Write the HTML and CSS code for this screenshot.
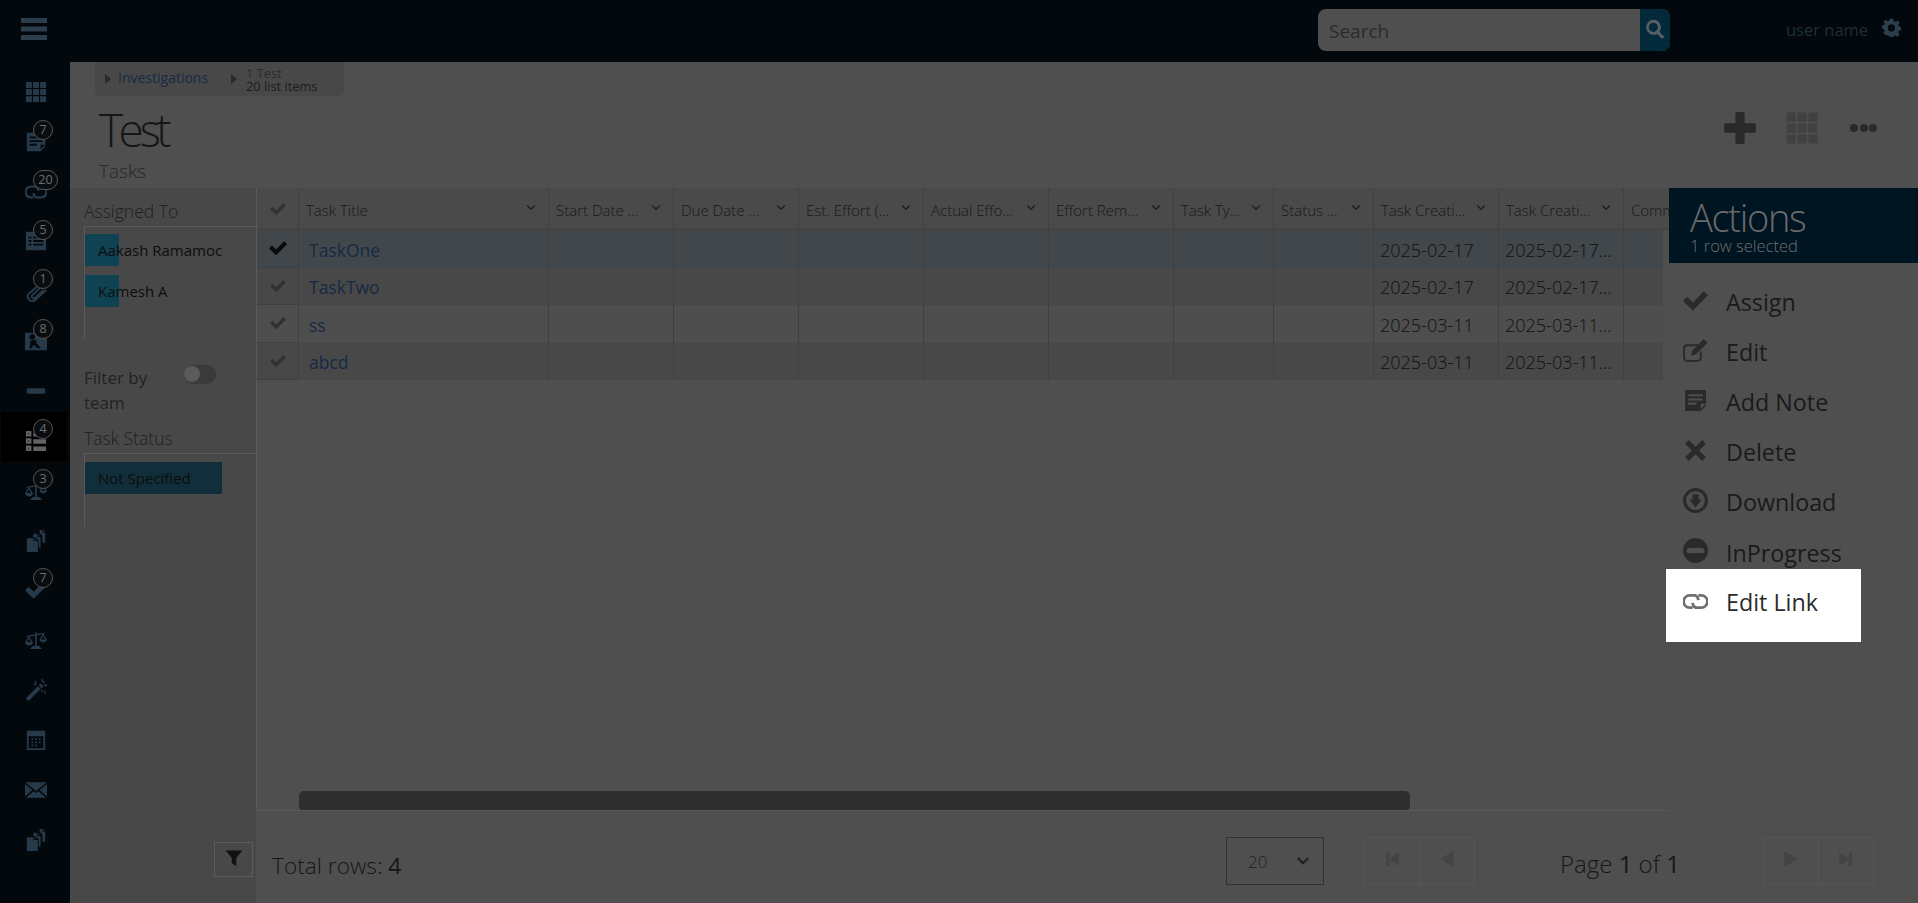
FILE: index.html
```html
<!DOCTYPE html>
<html lang="en">
<head>
<meta charset="utf-8">
<title>Test - Tasks</title>
<link rel="stylesheet" href="styles.css">
</head>
<body>
<svg class="defs" width="0" height="0" aria-hidden="true">
  <symbol id="i-check" viewBox="0 0 24 24"><path d="M0 12.500 4 8.500l5.500 5.500L20 3l4 4L9.500 21.500z"/></symbol>
  <symbol id="i-apps" viewBox="0 0 24 24"><path d="M1 1h6.500v6.500H1zM8.800 1h6.500v6.500H8.800zM16.500 1H23v6.500h-6.500zM1 8.800h6.500v6.500H1zM8.800 8.800h6.500v6.500H8.800zM16.500 8.800H23v6.500h-6.500zM1 16.500h6.500V23H1zM8.800 16.500h6.500V23H8.800zM16.500 16.500H23V23h-6.500z"/></symbol>
  <symbol id="i-note" viewBox="0 0 24 24"><path fill-rule="evenodd" d="M2 2h20v15l-5 5H2zm3 4v2h14V6zm0 4v2h14v-2zm0 4v2h8v-2zm12 1v5l5-5z"/></symbol>
  <symbol id="i-link" viewBox="0 -5 26 26"><path fill="none" stroke="currentColor" stroke-width="2.800" d="M10 14.400H7A6.400 6.400 0 0 1 7 1.600h6a6.400 6.400 0 0 1 3 5M16 1.600h3a6.400 6.400 0 0 1 0 12.800h-6a6.400 6.400 0 0 1-3-5"/></symbol>
  <symbol id="i-table" viewBox="0 0 24 24"><path fill-rule="evenodd" d="M1 2h22v20H1zm3 5v2h3V7zm5 0v2h11V7zm-5 4v2h3v-2zm5 0v2h11v-2zm-5 4v2h3v-2zm5 0v2h11v-2z"/></symbol>
  <symbol id="i-clip" viewBox="0 0 24 24"><path fill="none" stroke="currentColor" stroke-width="2.200" d="M18 3 4 15a5 5 0 0 0 7 7L23 11M17 8 8 16.500a2 2 0 0 0 3 3L20 11"/></symbol>
  <symbol id="i-image" viewBox="0 0 24 24"><path fill-rule="evenodd" d="M0 3h24v19H0zm8 1.500a3 3 0 1 0 0 6 3 3 0 0 0 0-6zM5 20h2.500l1.500-4 5 4h3.500l-5.500-6 1-2-3-1.500L6 12z"/></symbol>
  <symbol id="i-minus" viewBox="0 0 24 24"><rect x="2" y="9" width="20" height="6" rx="1"/></symbol>
  <symbol id="i-tasks" viewBox="0 0 24 24"><path fill-rule="evenodd" d="M1 1h6v6H1zm2.500 2.500v1h1v-1zM1 9h6v6H1zm2.500 2.500v1h1v-1zM1 17h6v6H1zm2.500 2.500v1h1v-1zM9 10h14v5H9zM9 18h14v5H9zM9 3h14v4H9z"/></symbol>
  <symbol id="i-scales" viewBox="0 0 26 24"><path d="M12 3h2v16h-2zM9 19h8l3 3.500H6zM2 7l21-3.500.3 1.500L2.300 8.500z"/><path fill-rule="evenodd" d="M4.500 7 0 15a5 5 0 0 0 9.500 0zm.1 3-2.400 4.500h4.700zM21.500 4 17 12a5 5 0 0 0 9 0zm.1 3L19 11.500h5z"/></symbol>
  <symbol id="i-docs" viewBox="0 0 24 24"><path d="M2 9h7v3h5v12H2zM10 9l3 2h-3zM9 4h4v4h4v11h-2v-8l-4-3H9zM14 4l2 3h-2zM16 0h3v3h3v11h-3V6l-3-3zM20 0l2 2h-2z"/></symbol>
  <symbol id="i-wand" viewBox="0 0 24 24"><path d="M1 21 14 8l3 3L4 24zM15 7l2-2 3 3-2 2zM11 2h1.500v4H11zM21 13h1.500v3H21zM18 0h1.500v3H18zM20.500 6H24v1.500h-3.500zM9 5.500 10 4.500l2 2-1 1zM21 2l1 1-2 2-1-1zM17 12.500l1-1 2 2-1 1z"/></symbol>
  <symbol id="i-cal" viewBox="0 0 24 24"><path fill-rule="evenodd" d="M2 2h20v21H2zm2 6v13h16V8zm3 2h2v2H7zm4 0h2v2h-2zm4 0h2v2h-2zm-8 3.500h2v2H7zm4 0h2v2h-2zm4 0h2v2h-2zM7 17h2v2H7zm4 0h2v2h-2z"/></symbol>
  <symbol id="i-mail" viewBox="0 0 24 24"><path d="M0 3.500h24L12 13zM0 5.500 8 12 0 19zM24 5.500 16 12l8 7zM9.500 13.300 12 15.300l2.500-2L23 20.500H1z"/></symbol>
  <symbol id="i-gear" viewBox="0 0 24 24"><path fill-rule="evenodd" d="M10 1h4l.7 3.200 2 .8L19.500 3.300l2.800 2.800-1.700 2.700.9 2 3 .7v4l-3.200.7-.8 2 1.700 2.700-2.800 2.800-2.700-1.700-2 .9-.7 3h-4l-.7-3.200-2-.8L4.500 21.700 1.700 18.900l1.700-2.700-.9-2-3-.7v-4l3.200-.7.8-2L1.700 5.100l2.800-2.800 2.700 1.700 2-.9zm2 7a4.500 4.500 0 1 0 0 9 4.500 4.500 0 0 0 0-9z"/></symbol>
  <symbol id="i-search" viewBox="0 0 24 24"><path fill-rule="evenodd" d="M10 1a9 9 0 0 1 7.300 14.200l6 6-2.800 2.800-6-6A9 9 0 1 1 10 1zm0 3.500a5.500 5.500 0 1 0 0 11 5.500 5.500 0 0 0 0-11z"/></symbol>
  <symbol id="i-plus" viewBox="0 0 24 24"><rect x="8.500" y="0" width="7" height="24" rx="1.500"/><rect x="0" y="8.500" width="24" height="7" rx="1.500"/></symbol>
  <symbol id="i-edit" viewBox="0 0 24 24"><path fill="none" stroke="currentColor" stroke-width="1.800" d="M17 13v6a3 3 0 0 1-3 3H4a3 3 0 0 1-3-3V10a3 3 0 0 1 3-3h10"/><path d="M9 12 20 1l3.500 3.500-11 11L8 17z"/></symbol>
  <symbol id="i-x" viewBox="0 0 24 24"><path d="M5.500 2 12 8.500 18.500 2 22 5.500 15.500 12l6.500 6.500-3.500 3.500L12 15.500 5.500 22 2 18.500 8.500 12 2 5.500z"/></symbol>
  <symbol id="i-down" viewBox="0 0 24 24"><path fill-rule="evenodd" d="M12 0a12 12 0 1 1 0 24 12 12 0 0 1 0-24zm0 3a9 9 0 1 0 0 18 9 9 0 0 0 0-18zM9 6h6v5h3l-6 8-6-8h3z"/></symbol>
  <symbol id="i-stop" viewBox="0 0 24 24"><path fill-rule="evenodd" d="M12 0a12 12 0 1 1 0 24 12 12 0 0 1 0-24zM6 9.500a1.500 1.500 0 0 0 0 5h12a1.500 1.500 0 0 0 0-5z"/></symbol>
  <symbol id="i-funnel" viewBox="0 0 24 24"><path d="M1 2h22l-8 10v11l-6-4v-7z"/></symbol>
  <symbol id="i-first" viewBox="0 0 24 24"><path d="M3 2h5v20H3zM22 1v22L8 12z"/></symbol>
  <symbol id="i-prev" viewBox="0 0 24 24"><path d="M22 0v24L2 12z"/></symbol>
  <symbol id="i-next" viewBox="0 0 24 24"><path d="M2 0v24l20-12z"/></symbol>
  <symbol id="i-last" viewBox="0 0 24 24"><path d="M16 2h5v20h-5zM2 1v22l14-11z"/></symbol>
  <symbol id="i-caret" viewBox="0 0 12 12"><path d="M3 1v10l6-5z"/></symbol>
  <symbol id="i-chev" viewBox="0 0 12 8"><path fill="none" stroke="currentColor" stroke-width="1.800" d="M1.500 1.500 6 6l4.500-4.500"/></symbol>
</svg>

<header class="topbar">
  <svg class="burger" viewBox="0 0 26 22"><path d="M0 0h26v5H0zM0 8.500h26v5H0zM0 17h26v5H0z"/></svg>
  <div class="search">
    <span class="search-text">Search</span>
    <span class="search-btn"><svg class="search-ico"><use href="#i-search"/></svg></span>
  </div>
  <span class="user">user name</span>
  <svg class="gear"><use href="#i-gear"/></svg>
</header>

<div class="body">
  <nav class="sidebar">
    <a class="nav"><svg class="nav-ico"><use href="#i-apps"/></svg></a>
    <a class="nav"><svg class="nav-ico"><use href="#i-note"/></svg><span class="badge">7</span></a>
    <a class="nav"><svg class="nav-ico"><use href="#i-link"/></svg><span class="badge wide">20</span></a>
    <a class="nav"><svg class="nav-ico"><use href="#i-table"/></svg><span class="badge">5</span></a>
    <a class="nav"><svg class="nav-ico"><use href="#i-clip"/></svg><span class="badge">1</span></a>
    <a class="nav"><svg class="nav-ico"><use href="#i-image"/></svg><span class="badge">8</span></a>
    <a class="nav"><svg class="nav-ico"><use href="#i-minus"/></svg></a>
    <a class="nav active"><svg class="nav-ico"><use href="#i-tasks"/></svg><span class="badge">4</span></a>
    <a class="nav"><svg class="nav-ico"><use href="#i-scales"/></svg><span class="badge">3</span></a>
    <a class="nav"><svg class="nav-ico"><use href="#i-docs"/></svg></a>
    <a class="nav"><svg class="nav-ico"><use href="#i-check"/></svg><span class="badge">7</span></a>
    <a class="nav"><svg class="nav-ico"><use href="#i-scales"/></svg></a>
    <a class="nav"><svg class="nav-ico"><use href="#i-wand"/></svg></a>
    <a class="nav"><svg class="nav-ico"><use href="#i-cal"/></svg></a>
    <a class="nav"><svg class="nav-ico"><use href="#i-mail"/></svg></a>
    <a class="nav"><svg class="nav-ico"><use href="#i-docs"/></svg></a>
  </nav>

  <main class="main">
    <section class="head">
      <div class="head-left">
        <div class="crumbs">
          <div class="crumb crumb-link"><svg class="caret"><use href="#i-caret"/></svg><span class="crumb-a">Investigations</span></div>
          <div class="crumb crumb-cur"><svg class="caret"><use href="#i-caret"/></svg><div class="crumb-stack"><span class="crumb-t">1 Test</span><span class="crumb-s">20 list items</span></div></div>
        </div>
        <h1 class="title">Test</h1>
        <div class="subtitle">Tasks</div>
      </div>
      <div class="tools">
        <svg class="tool-plus"><use href="#i-plus"/></svg>
        <svg class="tool-grid"><use href="#i-apps"/></svg>
        <span class="tool-dots"><i></i><i></i><i></i></span>
      </div>
    </section>

    <section class="content">
      <aside class="filters">
        <div class="f-label">Assigned To</div>
        <div class="f-box f-box-a">
          <div class="f-item part">Aakash Ramamoc</div>
          <div class="f-item part">Kamesh A</div>
        </div>
        <div class="f-team">
          <span class="f-team-l">Filter by team</span>
          <span class="toggle"><i></i></span>
        </div>
        <div class="f-label f-label-s">Task Status</div>
        <div class="f-box f-box-s">
          <div class="f-item full">Not Specified</div>
        </div>
        <button class="f-btn"><svg class="f-ico"><use href="#i-funnel"/></svg></button>
      </aside>

      <div class="gridwrap">
        <div class="grid">
          <div class="row hdr">
            <div class="c ck"><svg class="tick"><use href="#i-check"/></svg></div>
            <div class="c h"><span>Task Title</span><svg class="chev"><use href="#i-chev"/></svg></div>
            <div class="c h"><span>Start Date ...</span><svg class="chev"><use href="#i-chev"/></svg></div>
            <div class="c h"><span>Due Date ...</span><svg class="chev"><use href="#i-chev"/></svg></div>
            <div class="c h"><span>Est. Effort (...</span><svg class="chev"><use href="#i-chev"/></svg></div>
            <div class="c h"><span>Actual Effo...</span><svg class="chev"><use href="#i-chev"/></svg></div>
            <div class="c h"><span>Effort Rem...</span><svg class="chev"><use href="#i-chev"/></svg></div>
            <div class="c h"><span>Task Ty...</span><svg class="chev"><use href="#i-chev"/></svg></div>
            <div class="c h"><span>Status ...</span><svg class="chev"><use href="#i-chev"/></svg></div>
            <div class="c h"><span>Task Creati...</span><svg class="chev"><use href="#i-chev"/></svg></div>
            <div class="c h"><span>Task Creati...</span><svg class="chev"><use href="#i-chev"/></svg></div>
            <div class="c h"><span>Comments</span></div>
          </div>
          <div class="row dat sel">
            <div class="c ck"><svg class="tick on"><use href="#i-check"/></svg></div>
            <div class="c t"><a class="lnk">TaskOne</a></div>
            <div class="c"></div><div class="c"></div><div class="c"></div><div class="c"></div><div class="c"></div><div class="c"></div><div class="c"></div>
            <div class="c d">2025-02-17</div><div class="c d">2025-02-17...</div><div class="c"></div>
          </div>
          <div class="row dat alt">
            <div class="c ck"><svg class="tick"><use href="#i-check"/></svg></div>
            <div class="c t"><a class="lnk">TaskTwo</a></div>
            <div class="c"></div><div class="c"></div><div class="c"></div><div class="c"></div><div class="c"></div><div class="c"></div><div class="c"></div>
            <div class="c d">2025-02-17</div><div class="c d">2025-02-17...</div><div class="c"></div>
          </div>
          <div class="row dat">
            <div class="c ck"><svg class="tick"><use href="#i-check"/></svg></div>
            <div class="c t"><a class="lnk">ss</a></div>
            <div class="c"></div><div class="c"></div><div class="c"></div><div class="c"></div><div class="c"></div><div class="c"></div><div class="c"></div>
            <div class="c d">2025-03-11</div><div class="c d">2025-03-11...</div><div class="c"></div>
          </div>
          <div class="row dat alt">
            <div class="c ck"><svg class="tick"><use href="#i-check"/></svg></div>
            <div class="c t"><a class="lnk">abcd</a></div>
            <div class="c"></div><div class="c"></div><div class="c"></div><div class="c"></div><div class="c"></div><div class="c"></div><div class="c"></div>
            <div class="c d">2025-03-11</div><div class="c d">2025-03-11...</div><div class="c"></div>
          </div>
          <div class="scroll"><div class="thumb"></div></div>
        </div>
        <footer class="foot">
          <div class="total">Total rows: <b>4</b></div>
          <div class="size"><span>20</span><svg class="size-chev"><use href="#i-chev"/></svg></div>
          <div class="pgroup pgroup-l">
            <span class="pbtn"><svg class="pico"><use href="#i-first"/></svg></span>
            <span class="pbtn"><svg class="pico"><use href="#i-prev"/></svg></span>
          </div>
          <div class="page">Page <b>1</b> of <b>1</b></div>
          <div class="pgroup">
            <span class="pbtn"><svg class="pico"><use href="#i-next"/></svg></span>
            <span class="pbtn"><svg class="pico"><use href="#i-last"/></svg></span>
          </div>
        </footer>
      </div>

      <aside class="actions">
        <div class="a-head">
          <div class="a-title">Actions</div>
          <div class="a-sub">1 row selected</div>
        </div>
        <ul class="a-list">
          <li class="a-item"><svg class="a-ico"><use href="#i-check"/></svg>Assign</li>
          <li class="a-item"><svg class="a-ico"><use href="#i-edit"/></svg>Edit</li>
          <li class="a-item"><svg class="a-ico"><use href="#i-note"/></svg>Add Note</li>
          <li class="a-item"><svg class="a-ico"><use href="#i-x"/></svg>Delete</li>
          <li class="a-item"><svg class="a-ico"><use href="#i-down"/></svg>Download</li>
          <li class="a-item"><svg class="a-ico"><use href="#i-stop"/></svg>InProgress</li>
          <li class="a-item focus"><svg class="a-ico"><use href="#i-link"/></svg>Edit Link</li>
        </ul>
      </aside>
    </section>
  </main>
</div>
</body>
</html>
```
FILE: styles.css
```css
* { box-sizing: border-box; }
html, body { margin: 0; height: 100%; }
body {
  width: 1918px;
  height: 903px;
  overflow: hidden;
  background: #4f4f4f;
  color: #222;
  font-family: "Open Sans", "Noto Sans", "Liberation Sans", sans-serif;
  display: flex;
  flex-direction: column;
}
.defs { position: absolute; }
svg { fill: currentColor; display: block; }

/* top bar */
.topbar {
  height: 62px;
  flex: none;
  background: #03080c;
  display: flex;
  align-items: center;
  padding-left: 21px;
}
.burger { width: 26px; height: 22px; color: #2c3d4c; margin-top: -4px; }
.search {
  width: 352px;
  height: 42px;
  margin-left: 1271px;
  margin-top: -2px;
  background: #4f4f4f;
  border-radius: 8px;
  display: flex;
  overflow: hidden;
}
.search-text { flex: 1; font-size: 19px; line-height: 44px; padding-left: 11px; color: #2b2b2b; }
.search-btn { width: 30px; background: #022a3b; display: flex; align-items: center; justify-content: center; }
.search-ico { width: 20px; height: 20px; color: #565f64; margin-top: -2px; }
.user { margin-left: 116px; font-size: 16.500px; color: #1e2e3b; margin-top: -4px; }
.gear { width: 19px; height: 19px; color: #2c3d4c; margin-left: 14px; margin-top: -8px; }

.body { flex: 1; display: flex; min-height: 0; }

/* sidebar */
.sidebar {
  width: 70px;
  flex: none;
  background: #03080c;
  padding: 1px 3px 0 1px;
  display: flex;
  flex-direction: column;
}
.nav {
  height: 49.850px;
  flex: none;
  position: relative;
  display: flex;
  align-items: center;
  justify-content: center;
  color: #273a4a;
}
.nav.active { background: #000; color: #626262; }
.nav-ico { width: 22px; height: 22px; margin: 8px 0 0 3px; }
.badge {
  position: absolute;
  left: 32px;
  top: 7px;
  width: 20px;
  height: 20px;
  border-radius: 50%;
  background: #0a0d10;
  border: 1px solid #555;
  color: #6e6e6e;
  font-size: 12.500px;
  line-height: 18px;
  text-align: center;
}
.badge.wide { width: 25px; border-radius: 10px; }

/* main */
.main { flex: 1; min-width: 0; display: flex; flex-direction: column; }
.head { height: 126px; flex: none; display: flex; justify-content: space-between; }
.head-left { padding-left: 25px; }
.crumbs { display: flex; height: 34px; background: #484848; border-radius: 0 0 5px 5px; width: 249px; }
.crumb { display: flex; align-items: center; }
.crumb-link { width: 125px; padding-left: 7px; }
.caret { width: 12px; height: 12px; color: #2a2a2a; flex: none; }
.crumb-a { font-size: 14px; color: #162a45; margin-left: 4px; margin-top: -3px; white-space: nowrap; }
.crumb-cur { padding-left: 8px; }
.crumb-stack { display: flex; flex-direction: column; margin-left: 6px; font-size: 12.800px; line-height: 13px; margin-top: 1px; }
.crumb-t { color: #2c2c2c; }
.crumb-s { color: #1c1c1c; }
.title { margin: 8px 0 0 4px; font-size: 46px; font-weight: 300; line-height: 50px; letter-spacing: -4.500px; color: #161616; }
.subtitle { margin: 4px 0 0 4px; font-size: 19px; font-weight: 300; line-height: 26px; color: #262626; }
.tools { display: flex; align-items: center; padding: 49px 41px 0 0; height: 82px; }
.tool-plus { width: 32px; height: 32px; color: #2a2a2a; }
.tool-grid { width: 34px; height: 34px; color: #414141; margin-left: 29px; }
.tool-dots { display: flex; gap: 1.500px; margin-left: 31px; }
.tool-dots i { width: 8px; height: 8px; border-radius: 50%; background: #2a2a2a; }

.content { flex: 1; min-height: 0; display: flex; }

/* filters */
.filters {
  width: 186px;
  flex: none;
  background: #484848;
  padding: 0 0 26px 14px;
  display: flex;
  flex-direction: column;
  font-weight: 300;
}
.f-label { font-size: 17.500px; line-height: 24px; margin-top: 11px; color: #1f1f1f; }
.f-label-s { margin-top: 11px; }
.f-box { border-left: 1px solid #5a5a5a; border-top: 1px solid #5a5a5a; padding-top: 7px; display: flex; flex-direction: column; gap: 9px; }
.f-box-a { height: 114px; margin-top: 3px; }
.f-box-s { height: 74px; margin-top: 3px; padding-top: 8px; }
.f-item { height: 32px; font-size: 15px; font-weight: 400; line-height: 32px; padding-left: 13px; color: #0d0d0d; white-space: nowrap; overflow: hidden; }
.f-item.part { background: linear-gradient(#0f4354, #0f4354) no-repeat left / 34px 100%; }
.f-item.full { width: 137px; background: #102f3a; }
.f-team { display: flex; align-items: flex-start; margin-top: 25px; }
.f-team-l { width: 100px; font-size: 17px; line-height: 25px; font-weight: 400; color: #222; }
.toggle { width: 32px; height: 19px; background: #3a3a3a; border-radius: 10px; display: block; position: relative; }
.toggle i { position: absolute; left: 0; top: 1px; width: 16px; height: 16px; background: #5b5b5b; border-radius: 50%; }
.f-btn { margin: auto 3px 0 auto; width: 39px; height: 35px; background: transparent; border: 1px solid #5c5c5c; padding: 0; display: flex; align-items: center; justify-content: center; }
.f-ico { width: 18px; height: 18px; color: #111; margin-top: -4px; }

/* table */
.gridwrap { flex: 1; min-width: 0; display: flex; flex-direction: column; }
.grid { height: 623px; flex: none; border-left: 1px solid #5a5a5a; border-bottom: 1px solid #5a5a5a; overflow: hidden; position: relative; margin-right: -3px; }
.row { display: grid; grid-template-columns: 42px 250px 125px 125px 125px 125px 125px 100px 100px 125px 125px 125px; }
.hdr { height: 42px; background: #4a4a4a; border-bottom: 2px solid #444; }
.dat { height: 37.500px; background: #4e4e4e; margin-right: 6px; }
.dat.sel { background: #41474b; }
.dat.alt { background: #484848; }
.c { border-right: 1px solid #404040; display: flex; align-items: center; min-width: 0; }
.ck { justify-content: center; }
.dat .ck { border-bottom: 1px solid #404040; }
.tick { width: 16px; height: 16px; color: #323232; margin-left: 1px; }
.hdr .tick { margin-top: 2px; }
.tick.on { color: #0a0a0a; width: 18px; height: 18px; }
.h { padding: 3px 12px 0 7px; justify-content: space-between; font-size: 15px; font-weight: 300; color: #181818; white-space: nowrap; overflow: hidden; }
.chev { width: 10px; height: 7px; color: #1f1f1f; flex: none; margin-top: -4px; }
.t { padding-left: 10px; }
.lnk { font-size: 17.500px; color: #162a45; margin-top: 2px; }
.d { padding: 2px 0 0 6px; font-size: 18px; font-weight: 300; color: #101010; white-space: nowrap; }
.scroll { position: absolute; left: 42px; right: 0; bottom: -1px; height: 20px; }
.thumb { width: 1111px; height: 20px; background: #2e2e2e; border-radius: 5px; }

/* footer */
.foot { flex: 1; width: 1662px; display: flex; align-items: flex-start; font-size: 24px; font-weight: 300; color: #161616; padding: 26px 0 0 16px; }
.total { width: 954px; flex: none; font-size: 22.700px; margin-top: 12px; line-height: 34px; }
.total b, .page b { font-weight: 400; }
.size { width: 98px; height: 48px; flex: none; border: 1px solid #323232; display: flex; align-items: center; justify-content: space-between; padding: 0 13px 0 21px; font-size: 17px; color: #222; }
.size-chev { width: 14px; height: 10px; color: #1f1f1f; }
.pgroup { display: flex; height: 48px; flex: none; }
.pgroup-l { margin-left: 41px; }
.pbtn { width: 56px; height: 48px; border: 1px solid #565656; margin-left: -1px; display: flex; align-items: center; justify-content: center; }
.pico { width: 16px; height: 16px; color: #444; margin-top: -4px; }
.page { width: 289px; flex: none; padding-left: 85px; margin-top: 10px; line-height: 34px; white-space: nowrap; }

/* actions */
.actions { width: 252px; flex: none; position: relative; }
.a-head { height: 75px; margin-left: 3px; background: #001522; padding-left: 21px; color: #6a6a6a; font-weight: 300; overflow: hidden; }
.a-title { font-size: 38px; line-height: 44px; padding-top: 7px; height: 50px; letter-spacing: -1.300px; }
.a-sub { font-size: 16.500px; line-height: 20px; margin-top: -2px; color: #6e6e6e; }
.a-list { list-style: none; margin: 0; padding: 14px 0 0; }
.a-item { width: 195px; height: 50.100px; display: flex; align-items: center; padding-left: 17px; font-size: 23.300px; color: #1a1a1a; white-space: nowrap; }
.a-ico { width: 25px; height: 25px; color: #2a2a2a; margin-right: 18px; margin-top: -4px; flex: none; }
.a-item.focus { height: 73px; background: #fff; color: #2b2b2b; align-items: flex-start; padding-top: 17px; margin-top: -9px; position: relative; }
.a-item.focus .a-ico { color: #6f6f72; margin-top: 3px; }
```
